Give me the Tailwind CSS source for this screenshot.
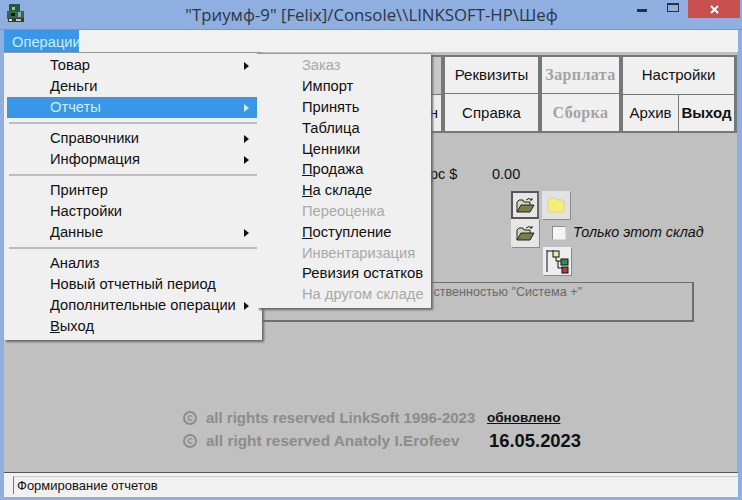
<!DOCTYPE html>
<html lang="en">
<head>
  <meta charset="UTF-8" />
  <title>Триумф-9</title>
  <script src="https://cdn.jsdelivr.net/npm/@tailwindcss/browser@4"></script>
</head>
<body class="w-[742px] h-[500px] overflow-hidden font-['Liberation_Sans',sans-serif] text-[14.7px] text-[#111]">
<div class="relative w-[742px] h-[500px] flex flex-col bg-[#8fafe0]">

  <!-- title bar -->
  <div class="h-[30px] shrink-0 relative flex items-center justify-center bg-[#8fafe0] border-b border-[#7d95bd]">
    <svg class="absolute left-[6px] top-[3px] w-[20px] h-[20px]" viewBox="0 0 20 20">
      <rect x="3" y="1" width="11" height="7" fill="#1c5a46"/>
      <rect x="1" y="8" width="17" height="8" fill="#2a6a4e"/>
      <rect x="2" y="15" width="16" height="4" fill="#3a3a2c"/>
      <rect x="6" y="4" width="3" height="3" fill="#b9c23a"/>
      <rect x="5" y="10" width="4" height="3" fill="#111"/>
      <rect x="12" y="9" width="3" height="5" fill="#9aa6a0"/>
      <rect x="3" y="16" width="3" height="2" fill="#d8d8c8"/>
      <rect x="10" y="16" width="5" height="2" fill="#c9c9a8"/>
    </svg>
    <span class="font-['Open_Sans',sans-serif] text-[16.8px] text-[#2b3646] ml-[1px]">"Триумф-9" [Felix]/Console\\LINKSOFT-HP\Шеф</span>
    <span class="absolute left-[637px] top-[9px] w-[10px] h-[3px] bg-[#26303f]"></span>
    <span class="absolute left-[667px] top-[3px] w-[12px] h-[9px] border border-t-2 border-[#26303f]"></span>
    <span class="absolute left-[688px] top-0 w-[52px] h-[18px] bg-[#c8504f] flex items-center justify-center">
      <svg class="w-[9px] h-[9px]" viewBox="0 0 9 9"><path d="M1 1l7 7M8 1l-7 7" stroke="#fff" stroke-width="2"/></svg>
    </span>
  </div>

  <!-- menu bar -->
  <div class="h-[22px] shrink-0 mx-[4px] bg-[#f1f1f1]">
    <div class="w-[75px] h-[22px] bg-[#3a96e6] text-[#c8f0fa] pl-[8px] leading-[24px] whitespace-nowrap">Операции</div>
  </div>

  <!-- client area -->
  <div class="flex-1 mx-[4px] mr-[5px] bg-[#c0c0c0] flex flex-col">
    <!-- toolbar -->
    <div class="mt-[3px] h-[78px] bg-[#777] flex gap-[4px] px-[4px] py-[2px] text-center text-[15px]">
      <div class="flex-1 flex flex-col gap-[1px]">
        <div class="flex-1 bg-[#c8c8c8]"></div>
        <div class="flex-1 bg-[#ededed] flex items-center justify-end pr-[3px]">н</div>
      </div>
      <div class="w-[93px] flex flex-col gap-[1px]">
        <div class="flex-1 bg-[#f0f0f0] flex items-center justify-center">Реквизиты</div>
        <div class="flex-1 bg-[#f0f0f0] flex items-center justify-center pt-[1px]">Справка</div>
      </div>
      <div class="w-[77px] flex flex-col gap-[1px] font-['Liberation_Serif',serif] font-bold text-[#a3a3a3]">
        <div class="flex-1 bg-[#f0f0f0] flex items-center justify-center text-[16px] tracking-[0.4px]">Зарплата</div>
        <div class="flex-1 bg-[#f0f0f0] flex items-center justify-center pt-[1px] text-[16px] tracking-[0.4px]">Сборка</div>
      </div>
      <div class="w-[111px] mr-[-1px] flex flex-col gap-[1px]">
        <div class="flex-1 bg-[#f0f0f0] flex items-center justify-center">Настройки</div>
        <div class="flex-1 flex gap-[1px]">
          <div class="w-[55px] bg-[#f0f0f0] flex items-center justify-center pt-[1px]">Архив</div>
          <div class="flex-1 bg-[#f0f0f0] flex items-center justify-center pt-[1px] font-bold">Выход</div>
        </div>
      </div>
    </div>

    <!-- rate -->
    <div class="mt-[34px] h-[16px] flex items-center whitespace-nowrap text-[14.5px]">
      <span class="ml-[426px] w-[62px]">рс $</span>
      <span>0.00</span>
    </div>

    <!-- folder buttons -->
    <div class="mt-[8px] ml-[507px] flex gap-[3px] h-[28px]">
      <div class="w-[28px] h-[28px] bg-[#e6e6e6] border-2 border-[#555] border-r-[#666] flex items-center justify-center">
        <svg class="w-[20px] h-[17px]" viewBox="0 0 20 17"><path d="M2 15V5l2-2h4l1 2h6v3" fill="#d8d8b0" stroke="#222"/><path d="M2 15l4-7h13l-4 7z" fill="#7c7c52" stroke="#222"/><path d="M11 3q3-3 6 0M17 3v-2M17 3h-2" fill="none" stroke="#222"/></svg>
      </div>
      <div class="w-[28px] h-[28px] bg-[#e2e2e2] shadow-[1px_1px_0_#8a8a8a] flex items-center justify-center">
        <svg class="w-[20px] h-[18px]" viewBox="0 0 20 18"><path d="M2 16V4l2-2h5l2 2h7v12z" fill="#f3ee75" stroke="#d9d59a"/></svg>
      </div>
    </div>
    <div class="ml-[507px] flex h-[28px] items-center">
      <div class="w-[28px] h-[28px] bg-[#e6e6e6] shadow-[1px_1px_0_#8a8a8a] flex items-center justify-center">
        <svg class="w-[20px] h-[17px]" viewBox="0 0 20 17"><path d="M2 15V5l2-2h4l1 2h6v3" fill="#d8d8b0" stroke="#222"/><path d="M2 15l4-7h13l-4 7z" fill="#7c7c52" stroke="#222"/><path d="M11 3q3-3 6 0M17 3v-2M17 3h-2" fill="none" stroke="#222"/></svg>
      </div>
      <span class="ml-[13px] w-[14px] h-[14px] bg-[#f4f4f4] border border-[#8c8c8c] border-r-[#d8d8d8] border-b-[#d8d8d8]"></span>
      <span class="ml-[7px] italic whitespace-nowrap text-[14.3px]">Только этот склад</span>
    </div>
    <div class="ml-[539px] w-[28px] h-[28px] bg-[#eeeeee] shadow-[1px_1px_0_#8a8a8a] flex items-center justify-center">
      <svg class="w-[26px] h-[26px]" viewBox="0 0 26 26" fill="none"><path d="M3 2v22M3 3h7M12 7v6h6M14 13v7h5" stroke="#111"/><rect x="9" y="3" width="6" height="6" fill="#e8e8b0" stroke="#111"/><rect x="17" y="11" width="7" height="6" fill="#2f8a5e" stroke="#111"/><rect x="18" y="19" width="6" height="6" fill="#b04040" stroke="#111"/></svg>
    </div>

    <!-- group box -->
    <div class="mt-[7px] ml-[236px] w-[454px] h-[40px] border border-[#6e6e6e] border-r-2 border-b-2 pr-[110px] text-right text-[12.6px] text-[#6a6a6a] whitespace-nowrap">ственностью "Система +"</div>

    <!-- copyright -->
    <div class="mt-[86px] ml-[179px] flex items-center h-[20px] whitespace-nowrap">
      <span class="w-[14px] h-[14px] rounded-full border-2 border-[#8d8d8d] text-[10px] leading-[10px] text-center font-bold text-[#8d8d8d]">c</span>
      <span class="ml-[9px] w-[281px] font-bold text-[15px] text-[#8c8c8c]">all rights reserved LinkSoft 1996-2023</span>
      <span class="font-bold underline text-[13.5px] text-[#111]">обновлено</span>
    </div>
    <div class="mt-[3px] ml-[179px] flex items-center h-[20px] whitespace-nowrap">
      <span class="w-[14px] h-[14px] rounded-full border-2 border-[#8d8d8d] text-[10px] leading-[10px] text-center font-bold text-[#8d8d8d]">c</span>
      <span class="ml-[9px] w-[283px] font-bold text-[15.4px] text-[#8c8c8c]">all right reserved Anatoly I.Erofeev</span>
      <span class="font-bold text-[18.4px] text-[#111]">16.05.2023</span>
    </div>
  </div>

  <!-- status bar -->
  <div class="h-[25px] shrink-0 mx-[4px] mb-[3px] border-t border-[#555] bg-[#f1f1f1] pt-[3px] pl-[9px]">
    <div class="h-[18px] border-l border-[#777] border-t border-t-[#c9c9c9] pl-[3px] text-[13px] leading-[18px]">Формирование отчетов</div>
  </div>

  <!-- main menu -->
  <div class="absolute left-[4px] top-[52px] w-[258px] h-[288px] bg-[#f0f0f0] border-t border-[#9a9a9a] shadow-[2px_2px_2px_#6a6a6a] pt-[2px] px-[3px] flex flex-col">
    <div class="h-[21px] shrink-0 pl-[43px] pr-[10px] flex items-center justify-between">Товар<i class="border-l-[5px] border-y-[4px] border-y-transparent border-l-[#111]"></i></div>
    <div class="h-[21px] shrink-0 pl-[43px] pr-[10px] flex items-center"><span><u>Д</u>еньги</span></div>
    <div class="h-[21px] shrink-0 pl-[43px] pr-[10px] flex items-center justify-between bg-[#3a96e6] text-[#c8f0fa]">Отчеты<i class="border-l-[5px] border-y-[4px] border-y-transparent border-l-[#c8f0fa]"></i></div>
    <div class="my-[4px] mx-[2px] h-[2px] bg-[#bdbdbd]"></div>
    <div class="h-[21px] shrink-0 pl-[43px] pr-[10px] flex items-center justify-between">Справочники<i class="border-l-[5px] border-y-[4px] border-y-transparent border-l-[#111]"></i></div>
    <div class="h-[21px] shrink-0 pl-[43px] pr-[10px] flex items-center justify-between">Информация<i class="border-l-[5px] border-y-[4px] border-y-transparent border-l-[#111]"></i></div>
    <div class="my-[4px] mx-[2px] h-[2px] bg-[#bdbdbd]"></div>
    <div class="h-[21px] shrink-0 pl-[43px] pr-[10px] flex items-center">Принтер</div>
    <div class="h-[21px] shrink-0 pl-[43px] pr-[10px] flex items-center">Настройки</div>
    <div class="h-[21px] shrink-0 pl-[43px] pr-[10px] flex items-center justify-between">Данные<i class="border-l-[5px] border-y-[4px] border-y-transparent border-l-[#111]"></i></div>
    <div class="my-[4px] mx-[2px] h-[2px] bg-[#bdbdbd]"></div>
    <div class="h-[21px] shrink-0 pl-[43px] pr-[10px] flex items-center">Анализ</div>
    <div class="h-[21px] shrink-0 pl-[43px] pr-[10px] flex items-center">Новый отчетный период</div>
    <div class="h-[21px] shrink-0 pl-[43px] pr-[10px] flex items-center justify-between">Дополнительные операции<i class="border-l-[5px] border-y-[4px] border-y-transparent border-l-[#111]"></i></div>
    <div class="h-[21px] shrink-0 pl-[43px] pr-[10px] flex items-center"><span><u>В</u>ыход</span></div>
  </div>

  <!-- submenu -->
  <div class="absolute left-[257px] top-[53px] w-[174px] h-[255px] bg-[#f0f0f0] border-t border-[#9a9a9a] shadow-[2px_2px_2px_#6a6a6a] pt-[1px] pl-[45px] flex flex-col whitespace-nowrap">
    <div class="h-[20.8px] flex items-center text-[#a9a9a9]">Заказ</div>
    <div class="h-[20.8px] flex items-center">Импорт</div>
    <div class="h-[20.8px] flex items-center">Принять</div>
    <div class="h-[20.8px] flex items-center">Таблица</div>
    <div class="h-[20.8px] flex items-center">Ценники</div>
    <div class="h-[20.8px] flex items-center"><span><u>П</u>родажа</span></div>
    <div class="h-[20.8px] flex items-center"><span><u>Н</u>а складе</span></div>
    <div class="h-[20.8px] flex items-center text-[#a9a9a9]">Переоценка</div>
    <div class="h-[20.8px] flex items-center"><span><u>П</u>оступление</span></div>
    <div class="h-[20.8px] flex items-center text-[#a9a9a9]">Инвентаризация</div>
    <div class="h-[20.8px] flex items-center text-[14.9px]">Ревизия остатков</div>
    <div class="h-[20.8px] flex items-center text-[#a9a9a9]">На другом складе</div>
  </div>
</div>
</body>
</html>
